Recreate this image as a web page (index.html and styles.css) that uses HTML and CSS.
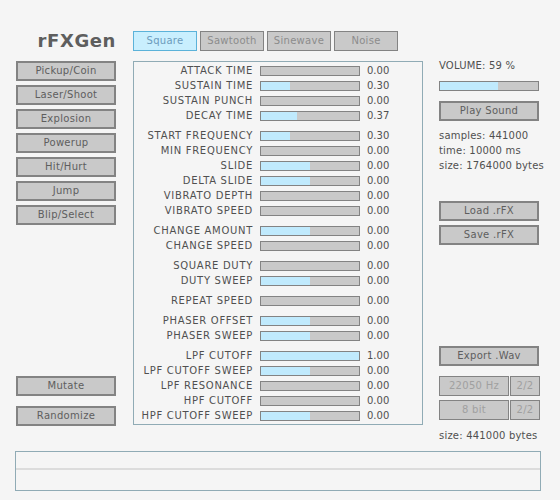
FILE: index.html
```html
<!DOCTYPE html>
<html>
<head>
<meta charset="utf-8">
<link rel="stylesheet" href="styles.css">
</head>
<body>
<div class="app">
  <div class="header">
    <div class="title">rFXGen</div>
    <div class="tabs">
      <div class="tab active">Square</div>
      <div class="tab">Sawtooth</div>
      <div class="tab">Sinewave</div>
      <div class="tab">Noise</div>
    </div>
  </div>
  <div class="main">
    <div class="left">
      <div class="btn">Pickup/Coin</div>
      <div class="btn">Laser/Shoot</div>
      <div class="btn">Explosion</div>
      <div class="btn">Powerup</div>
      <div class="btn">Hit/Hurt</div>
      <div class="btn">Jump</div>
      <div class="btn">Blip/Select</div>
      <div class="btn mutate">Mutate</div>
      <div class="btn randomize">Randomize</div>
    </div>
    <div class="panel">
      <div class="group">
        <div class="row"><span class="lbl">ATTACK TIME</span><div class="slider"><div class="fill" style="width:0%"></div></div><span class="val">0.00</span></div>
        <div class="row"><span class="lbl">SUSTAIN TIME</span><div class="slider"><div class="fill" style="width:30%"></div></div><span class="val">0.30</span></div>
        <div class="row"><span class="lbl">SUSTAIN PUNCH</span><div class="slider"><div class="fill" style="width:0%"></div></div><span class="val">0.00</span></div>
        <div class="row"><span class="lbl">DECAY TIME</span><div class="slider"><div class="fill" style="width:37%"></div></div><span class="val">0.37</span></div>
      </div>
      <div class="group">
        <div class="row"><span class="lbl">START FREQUENCY</span><div class="slider"><div class="fill" style="width:30%"></div></div><span class="val">0.30</span></div>
        <div class="row"><span class="lbl">MIN FREQUENCY</span><div class="slider"><div class="fill" style="width:0%"></div></div><span class="val">0.00</span></div>
        <div class="row"><span class="lbl">SLIDE</span><div class="slider"><div class="fill" style="width:50%"></div></div><span class="val">0.00</span></div>
        <div class="row"><span class="lbl">DELTA SLIDE</span><div class="slider"><div class="fill" style="width:50%"></div></div><span class="val">0.00</span></div>
        <div class="row"><span class="lbl">VIBRATO DEPTH</span><div class="slider"><div class="fill" style="width:0%"></div></div><span class="val">0.00</span></div>
        <div class="row"><span class="lbl">VIBRATO SPEED</span><div class="slider"><div class="fill" style="width:0%"></div></div><span class="val">0.00</span></div>
      </div>
      <div class="group">
        <div class="row"><span class="lbl">CHANGE AMOUNT</span><div class="slider"><div class="fill" style="width:50%"></div></div><span class="val">0.00</span></div>
        <div class="row"><span class="lbl">CHANGE SPEED</span><div class="slider"><div class="fill" style="width:0%"></div></div><span class="val">0.00</span></div>
      </div>
      <div class="group">
        <div class="row"><span class="lbl">SQUARE DUTY</span><div class="slider"><div class="fill" style="width:0%"></div></div><span class="val">0.00</span></div>
        <div class="row"><span class="lbl">DUTY SWEEP</span><div class="slider"><div class="fill" style="width:50%"></div></div><span class="val">0.00</span></div>
      </div>
      <div class="group">
        <div class="row"><span class="lbl">REPEAT SPEED</span><div class="slider"><div class="fill" style="width:0%"></div></div><span class="val">0.00</span></div>
      </div>
      <div class="group">
        <div class="row"><span class="lbl">PHASER OFFSET</span><div class="slider"><div class="fill" style="width:50%"></div></div><span class="val">0.00</span></div>
        <div class="row"><span class="lbl">PHASER SWEEP</span><div class="slider"><div class="fill" style="width:50%"></div></div><span class="val">0.00</span></div>
      </div>
      <div class="group">
        <div class="row"><span class="lbl">LPF CUTOFF</span><div class="slider"><div class="fill" style="width:100%"></div></div><span class="val">1.00</span></div>
        <div class="row"><span class="lbl">LPF CUTOFF SWEEP</span><div class="slider"><div class="fill" style="width:50%"></div></div><span class="val">0.00</span></div>
        <div class="row"><span class="lbl">LPF RESONANCE</span><div class="slider"><div class="fill" style="width:0%"></div></div><span class="val">0.00</span></div>
        <div class="row"><span class="lbl">HPF CUTOFF</span><div class="slider"><div class="fill" style="width:0%"></div></div><span class="val">0.00</span></div>
        <div class="row"><span class="lbl">HPF CUTOFF SWEEP</span><div class="slider"><div class="fill" style="width:50%"></div></div><span class="val">0.00</span></div>
      </div>
    </div>
    <div class="right">
      <div class="text">VOLUME: 59 %</div>
      <div class="volume"><div class="fill" style="width:59%"></div></div>
      <div class="btn play">Play Sound</div>
      <div class="info">
        <div class="text">samples: 441000</div>
        <div class="text">time: 10000 ms</div>
        <div class="text">size: 1764000 bytes</div>
      </div>
      <div class="btn load">Load .rFX</div>
      <div class="btn save">Save .rFX</div>
      <div class="btn export">Export .Wav</div>
      <div class="opt first"><div class="sbtn wide">22050 Hz</div><div class="sbtn narrow">2/2</div></div>
      <div class="opt"><div class="sbtn wide">8 bit</div><div class="sbtn narrow">2/2</div></div>
      <div class="text size">size: 441000 bytes</div>
    </div>
  </div>
  <div class="footer"><div class="footer-top"></div></div>
</div>
</body>
</html>
```

FILE: styles.css
```css
* { box-sizing: border-box; }
html, body { margin: 0; padding: 0; }
body {
  background: #f5f5f5;
  font-family: "DejaVu Sans", sans-serif;
  font-size: 10px;
  color: #686868;
  width: 560px;
  height: 500px;
  overflow: hidden;
}
.app { padding: 31px 0 0 16px; }
.header { display: flex; height: 20px; }
.title {
  width: 100px;
  margin-right: 17px;
  text-align: right;
  font-size: 18px;
  line-height: 20px;
  font-weight: bold;
  letter-spacing: 0.6px;
  color: #5e5e5e;
}
.tabs { display: flex; gap: 3px; }
.tab {
  width: 64px;
  height: 20px;
  border: 1px solid #838383;
  background: #c9c9c9;
  color: #8c8c8c;
  text-align: center;
  line-height: 18px;
  letter-spacing: 0.3px;
}
.tab.active { border-color: #5bb2d9; background: #c9effe; color: #6c9bbc; }
.main { display: flex; margin-top: 10px; height: 365px; align-items: flex-start; }
.left { width: 100px; height: 365px; display: flex; flex-direction: column; gap: 4px; }
.btn {
  height: 20px;
  border: 2px solid #838383;
  background: #c9c9c9;
  color: #5e5e5e;
  text-align: center;
  line-height: 16px;
  letter-spacing: 0.3px;
}
.mutate { margin-top: auto; }
.randomize { margin-top: 6px; }
.panel {
  margin-left: 17px;
  width: 290px;
  height: 364px;
  border: 1px solid #90abb5;
  padding-top: 4px;
  display: flex;
  flex-direction: column;
  gap: 10px;
}
.group { display: flex; flex-direction: column; gap: 5px; }
.row {
  display: grid;
  grid-template-columns: 120px 100px auto;
  column-gap: 6px;
  height: 10px;
  align-items: center;
}
.lbl {
  text-align: right;
  line-height: 10px;
  color: #505050;
  letter-spacing: 0.7px;
  white-space: nowrap;
  padding-right: 1px;
}
.val { line-height: 10px; color: #505050; padding-left: 1px; }
.slider, .volume {
  height: 10px;
  border: 1px solid #838383;
  background: #c9c9c9;
}
.fill { height: 100%; background: #c0eafd; }
.right {
  margin-left: 16px;
  width: 100px;
  display: flex;
  flex-direction: column;
}
.text { line-height: 10px; color: #505050; white-space: nowrap; letter-spacing: 0.2px; }
.volume { margin-top: 10px; }
.play { margin-top: 10px; }
.info { margin-top: 10px; display: flex; flex-direction: column; gap: 5px; }
.load { margin-top: 30px; }
.save { margin-top: 4px; }
.export { margin-top: 101px; }
.opt { display: flex; gap: 1px; margin-top: 4px; width: 101px; }
.opt.first { margin-top: 10px; }
.sbtn {
  height: 20px;
  border: 1px solid #838383;
  background: #c9c9c9;
  color: #a0a0a0;
  text-align: center;
  line-height: 18px;
  letter-spacing: 0.3px;
}
.sbtn.wide { width: 70px; }
.sbtn.narrow { width: 30px; }
.size { margin-top: 11px; }
.footer {
  margin-top: 25px;
  margin-left: -1px;
  width: 526px;
  height: 40px;
  border: 1px solid #90abb5;
}
.footer-top { height: 18px; border-bottom: 2px solid #dcdcdc; }
```
